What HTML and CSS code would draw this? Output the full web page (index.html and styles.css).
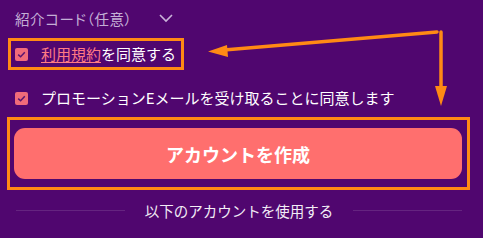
FILE: index.html
```html
<!DOCTYPE html>
<html lang="ja">
<head>
<meta charset="utf-8">
<link rel="stylesheet" href="styles.css">
</head>
<body>
<div class="panel">
  <div class="referral">
    <span class="referral-label">紹介コード（任意）</span>
    <svg class="chevron" width="14" height="9" viewBox="0 0 14 9"><polyline points="1,1 7,7 13,1" fill="none" stroke="#c9b3d9" stroke-width="1.6"/></svg>
  </div>
  <div class="terms-box">
    <span class="check"><svg width="13" height="13" viewBox="0 0 13 13"><polyline points="3.2,6.6 5.6,8.8 9.8,4.2" fill="none" stroke="#5a1470" stroke-width="1.5"/></svg></span>
    <span class="label"><a class="link">利用規約</a>を同意する</span>
  </div>
  <div class="promo">
    <span class="check"><svg width="13" height="13" viewBox="0 0 13 13"><polyline points="3.2,6.6 5.6,8.8 9.8,4.2" fill="none" stroke="#5a1470" stroke-width="1.5"/></svg></span>
    <span class="label">プロモーションEメールを受け取ることに同意します</span>
  </div>
  <div class="cta-box">
    <button class="cta">アカウントを作成</button>
  </div>
  <div class="divider">
    <span class="line"></span>
    <span class="divider-text">以下のアカウントを使用する</span>
    <span class="line"></span>
  </div>
</div>
<svg class="arrows" width="483" height="238" viewBox="0 0 483 238">
  <line x1="437" y1="32" x2="224" y2="50" stroke="#ff8a14" stroke-width="3.5" stroke-linecap="round"/>
  <polygon points="208,51.5 227,45 228,57" fill="#ff8a14"/>
  <line x1="441" y1="32" x2="441" y2="90" stroke="#ff8a14" stroke-width="3.5" stroke-linecap="round"/>
  <polygon points="435,86 447,86 441,106" fill="#ff8a14"/>
</svg>
</body>
</html>
```

FILE: styles.css
```css
html, body {
  margin: 0;
  padding: 0;
}
body {
  width: 483px;
  height: 238px;
  overflow: hidden;
  background: #50066f;
  font-family: "Noto Sans CJK JP", "Noto Sans", sans-serif;
  color: #ffffff;
  position: relative;
}
.panel {
  display: flex;
  flex-direction: column;
}
.referral {
  display: flex;
  align-items: center;
  margin: 8px 0 0 15px;
  height: 20px;
}
.referral-label {
  font-size: 14.5px;
  color: #c4aed6;
  font-feature-settings: "palt";
  letter-spacing: 0.6px;
}
.chevron {
  margin-left: 27px;
}
.terms-box {
  margin: 10px 0 0 8px;
  width: 176px;
  height: 32px;
  box-sizing: border-box;
  border: 3px solid #ff8a14;
  display: flex;
  align-items: center;
  padding-left: 4px;
}
.check {
  width: 13px;
  height: 13px;
  border-radius: 2px;
  background: #f06b7a;
  display: block;
  flex: none;
}
.check svg {
  display: block;
}
.label {
  margin-left: 13px;
  font-size: 15px;
  line-height: 20px;
  white-space: nowrap;
}
.link {
  color: #ff7b83;
  text-decoration: underline;
  text-underline-offset: 2px;
}
.promo {
  display: flex;
  align-items: center;
  height: 20px;
  margin: 18px 0 0 15px;
}
.cta-box {
  margin: 9px 0 0 7px;
  width: 463px;
  height: 73px;
  box-sizing: border-box;
  border: 3px solid #ff8a14;
  padding: 8px 5px 8px 4px;
  display: flex;
}
.cta {
  flex: 1;
  border: none;
  border-radius: 11px;
  background: #ff6f6e;
  color: #ffffff;
  font-family: "Noto Sans CJK JP", "Noto Sans", sans-serif;
  font-weight: 700;
  font-size: 18px;
  padding: 0;
}
.divider {
  display: flex;
  align-items: center;
  margin: 10px 0 0 16px;
  width: 446px;
  height: 20px;
}
.line {
  flex: 1;
  height: 1px;
  background: rgba(255, 255, 255, 0.12);
}
.divider-text {
  padding: 0 20px;
  font-size: 14.5px;
  color: #f2ecf6;
}
.arrows {
  position: absolute;
  left: 0;
  top: 0;
  pointer-events: none;
}
```
